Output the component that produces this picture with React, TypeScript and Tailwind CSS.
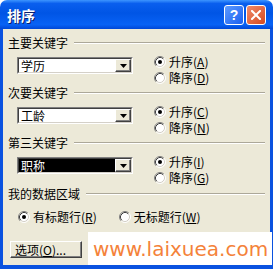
import React from "react"

const cjk = "font-['SimSun','Noto_Sans_CJK_SC',sans-serif]"

const Radio = ({ checked }: { checked?: boolean }) => (
  <svg width="12" height="12" viewBox="0 0 12 12" className="shrink-0">
    <circle cx="6" cy="6" r="5" fill="#ffffff" />
    <path d="M2.11 9.89 A5.5 5.5 0 0 1 9.89 2.11" fill="none" stroke="#808080" strokeWidth="1" />
    <path d="M9.89 2.11 A5.5 5.5 0 0 1 2.11 9.89" fill="none" stroke="#ffffff" strokeWidth="1" />
    <path d="M2.82 9.18 A4.5 4.5 0 0 1 9.18 2.82" fill="none" stroke="#404040" strokeWidth="1" />
    <path d="M9.18 2.82 A4.5 4.5 0 0 1 2.82 9.18" fill="none" stroke="#d4d0c8" strokeWidth="1" />
    {checked && <circle cx="6" cy="6" r="2" fill="#000000" />}
  </svg>
)

const Option = ({ label, accel, checked }: { label: string; accel: string; checked?: boolean }) => (
  <div className="flex items-center h-[16px]">
    <Radio checked={checked} />
    <span className="ml-[3px] text-[12px] leading-[14px] text-black whitespace-nowrap">
      {label}(<u>{accel}</u>)
    </span>
  </div>
)

const Combo = ({ value, selected }: { value: string; selected?: boolean }) => (
  <div className="w-[116px] h-[17px] border border-t-[#808080] border-l-[#808080] border-b-white border-r-white">
    <div className="h-full flex bg-white border border-t-[#404040] border-l-[#404040] border-b-[#d4d0c8] border-r-[#d4d0c8]">
      <div
        className={`flex-1 flex items-center pl-[2px] text-[12px] leading-[13px] ${
          selected ? "bg-black text-white" : "text-black"
        }`}
      >
        {value}
      </div>
      <div className="w-[16px] h-full flex items-center justify-center bg-[#ece9d8] border border-t-white border-l-white border-b-[#404040] border-r-[#404040] shadow-[inset_-1px_-1px_0_#808080]">
        <svg width="7" height="4" viewBox="0 0 7 4">
          <path d="M0 0 H7 L3.5 4 Z" fill="#000000" />
        </svg>
      </div>
    </div>
  </div>
)

const SectionLabel = ({ text }: { text: string }) => (
  <div className="flex items-center h-[14px]">
    <span className="text-[12px] leading-[14px] text-black whitespace-nowrap">{text}</span>
    <div className="flex-1 ml-[6px] h-[2px] border-t border-t-[#aca899] border-b border-b-white" />
  </div>
)

const sections = [
  { title: "主要关键字", value: "学历", asc: "A", desc: "D" },
  { title: "次要关键字", value: "工龄", asc: "C", desc: "N" },
  { title: "第三关键字", value: "职称", asc: "I", desc: "G", selected: true },
]

const App = () => {
  return (
    <div className={`relative w-[273px] h-[269px] bg-white ${cjk}`}>
      <div className="w-full h-full flex flex-col">
        {/* title bar */}
        <div className="h-[29px] rounded-t-[7px] flex items-center pl-[7px] pr-[7px] bg-[linear-gradient(to_bottom,#3d95ff_0%,#0a5fee_12%,#0055e5_45%,#0862f5_85%,#0047d6_100%)]">
          <span className="text-[14px] font-bold leading-[16px] text-white [text-shadow:1px_1px_0_#0a1e6a] font-['Noto_Sans_CJK_SC',sans-serif]">
            排序
          </span>
          <div className="ml-auto flex gap-[2px]">
            <div className="w-[20px] h-[20px] rounded-[3px] border border-white bg-[linear-gradient(135deg,#5d9bff,#1a5ff0)] flex items-center justify-center">
              <span className="text-white text-[14px] font-bold leading-none font-['Liberation_Sans',sans-serif]">?</span>
            </div>
            <div className="w-[20px] h-[20px] rounded-[3px] border border-white bg-[linear-gradient(135deg,#ef8a6a,#d64a20)] flex items-center justify-center">
              <svg width="10" height="10" viewBox="0 0 10 10">
                <path d="M1 1 L9 9 M9 1 L1 9" stroke="#ffffff" strokeWidth="2" strokeLinecap="square" />
              </svg>
            </div>
          </div>
        </div>

        {/* body */}
        <div className="flex-1 bg-[#ece9d8] border-x-[3px] border-b-[4px] border-[#0a52e0] px-[5px] pt-[7px]">
          {sections.map((s) => (
            <div key={s.title} className="h-[50px]">
              <SectionLabel text={s.title} />
              <div className="flex mt-[4px]">
                <div className="ml-[9px] mt-[3px]">
                  <Combo value={s.value} selected={s.selected} />
                </div>
                <div className="ml-[21px] flex flex-col">
                  <Option label="升序" accel={s.asc} checked />
                  <Option label="降序" accel={s.desc} />
                </div>
              </div>
            </div>
          ))}

          <div className="mt-[1px]">
            <SectionLabel text="我的数据区域" />
          </div>
          <div className="flex mt-[8px] ml-[10px] gap-[22px]">
            <Option label="有标题行" accel="R" checked />
            <Option label="无标题行" accel="W" />
          </div>

          <div className="mt-[16px] ml-[2px] w-[72px] h-[17px] bg-[#ece9d8] border border-t-white border-l-white border-b-[#404040] border-r-[#404040] shadow-[inset_-1px_-1px_0_#808080] flex items-center pl-[4px]">
            <span className="text-[12px] leading-[14px] text-black whitespace-nowrap">
              选项(<u>O</u>)...
            </span>
          </div>
        </div>
      </div>

      {/* watermark */}
      <div className="absolute left-[88px] top-[232px] w-[184px] h-[33px] bg-white flex items-center pl-[5px]">
        <span className="text-[20px] leading-none text-[#f4823a] font-['DejaVu_Sans',sans-serif] whitespace-nowrap">
          www.laixuea.com
        </span>
      </div>
    </div>
  )
}

export default App
